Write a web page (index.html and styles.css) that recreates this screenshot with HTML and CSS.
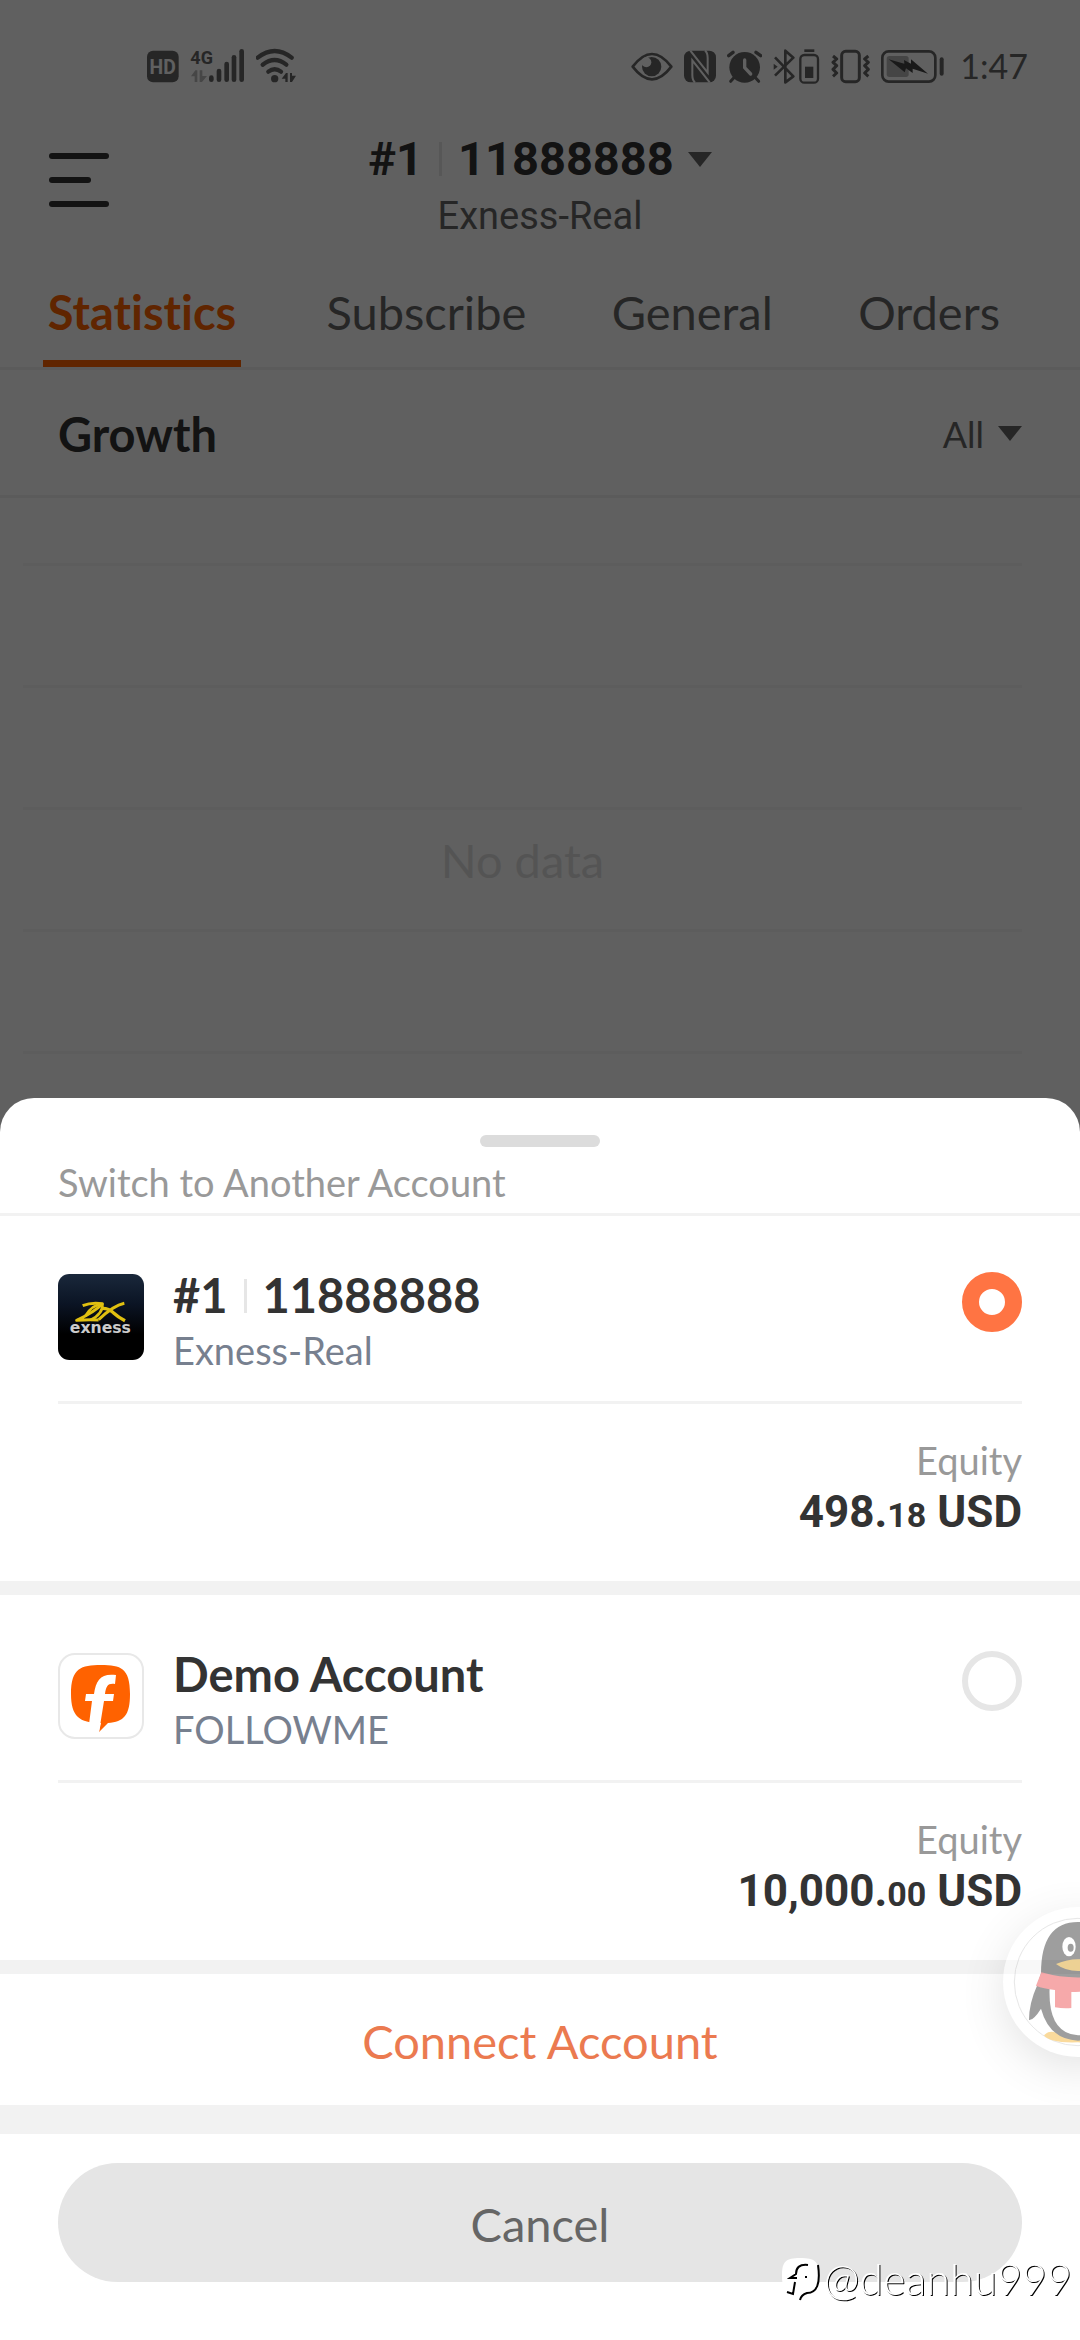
FILE: index.html
```html
<!DOCTYPE html>
<html lang="en">
<head>
<meta charset="UTF-8">
<meta name="viewport" content="width=device-width, initial-scale=1.0">
<title>Switch Account</title>
<link rel="stylesheet" href="styles.css">
</head>
<body>

<div class="page">
    <div class="status-bar">
        <div class="status-group">
            <svg class="icon-hd" viewBox="53 54 96 108" aria-hidden="true">
                <rect x="53" y="62" width="95" height="95" rx="18" fill="#666"/>
                <text x="100" y="132" font-size="58" font-weight="700" text-anchor="middle" fill="#fff">HD</text>
            </svg>
            <svg class="icon-signal" viewBox="180 54 165 108" aria-hidden="true">
                <text x="181" y="101" font-size="54" font-weight="700" fill="#666">4G</text>
                <g fill="#bbb">
                    <path d="M183 139 L196 121 H202 V156 H194 V139 Z"/>
                    <path d="M209 121 H217 V138 H231 L216 156 H209 Z"/>
                </g>
                <g stroke="#666" stroke-width="14" stroke-linecap="round">
                    <path d="M244 143 V149"/>
                    <path d="M267 123 V149"/>
                    <path d="M290 102 V149"/>
                    <path d="M312 82 V149"/>
                    <path d="M335 64 V149"/>
                </g>
            </svg>
            <svg class="icon-wifi" viewBox="375 54 126 108" aria-hidden="true">
                <g fill="none" stroke="#666" stroke-width="13" stroke-linecap="round">
                    <path d="M380 83 Q431 43 482 83"/>
                    <path d="M395 104 Q431 76 466 104"/>
                    <path d="M412 125 Q431 110 450 125"/>
                </g>
                <circle cx="431" cy="146" r="11" fill="#666"/>
                <path d="M452 146 L465 129 H470 V156 H463 V146 Z M477 129 H483 V137 H495 L483 156 H477 Z" fill="#666"/>
            </svg>
        </div>
        <div class="status-group">
            <svg class="icon-eye" viewBox="59 54 126 108" aria-hidden="true">
                <path d="M64 110 Q122 34 180 110 Q122 186 64 110 Z" fill="none" stroke="#666" stroke-width="8" stroke-linejoin="round"/>
                <circle cx="121" cy="110" r="29" fill="#666"/>
                <circle cx="105" cy="97" r="15" fill="#fff"/>
            </svg>
            <svg class="icon-nfc" viewBox="219 54 96 108" aria-hidden="true">
                <rect x="219" y="62" width="96" height="95" rx="20" fill="#666"/>
                <path d="M238 62 L290 128 V84 Q290 68 282 62 M296 157 L244 91 V135 Q244 151 252 157" fill="none" stroke="#fff" stroke-width="6"/>
            </svg>
            <svg class="icon-alarm" viewBox="351 54 105 108" aria-hidden="true">
                <circle cx="404" cy="112" r="46" fill="#666"/>
                <path d="M356 77 L369 67 M452 77 L438 67" stroke="#666" stroke-width="10" stroke-linecap="round"/>
                <path d="M371 144 L362 154 M437 144 L446 154" stroke="#666" stroke-width="9" stroke-linecap="round"/>
                <path d="M404 90 V113 L422 132" fill="none" stroke="#fff" stroke-width="10" stroke-linecap="round"/>
            </svg>
            <svg class="icon-bluetooth" viewBox="489 54 141 108" aria-hidden="true">
                <path d="M495 82 L550 139 L526 157 V62 L550 83 L495 137" fill="none" stroke="#666" stroke-width="8" stroke-linejoin="round"/>
                <path d="M491 101 L503 110 L491 119 Z" fill="#666"/>
                <rect x="571" y="75" width="53" height="83" rx="12" fill="none" stroke="#666" stroke-width="7"/>
                <path d="M583 62 H613" stroke="#666" stroke-width="8"/>
                <rect x="585" y="110" width="25" height="34" fill="#666"/>
            </svg>
            <svg class="icon-vibrate" viewBox="663 54 117 108" aria-hidden="true">
                <rect x="695" y="64" width="53" height="91" rx="12" fill="none" stroke="#666" stroke-width="9"/>
                <path d="M669 78 L680 87 L669 97 L680 107 L669 118 L680 129 L669 139 M775 78 L764 87 L775 97 L764 107 L775 118 L764 129 L775 139" fill="none" stroke="#666" stroke-width="9" stroke-linejoin="round"/>
            </svg>
            <svg class="icon-battery" viewBox="819 54 189 108" aria-hidden="true">
                <rect x="823" y="64" width="159" height="91" rx="19" fill="none" stroke="#666" stroke-width="8"/>
                <rect x="836" y="78" width="66" height="63" rx="8" fill="#b8b8b8"/>
                <path d="M842 88 L889 101 L888 90 L909 101 L909 88 L960 131 L914 116 V129 L894 115 L890 127 Z" fill="#444"/>
                <path d="M1001 88 V131" stroke="#666" stroke-width="12" stroke-linecap="round"/>
            </svg>
            <span class="clock">1:47</span>
        </div>
    </div>

    <header class="top-bar">
        <button class="menu-button" type="button" aria-label="Menu">
            <span class="menu-line"></span>
            <span class="menu-line menu-line-short"></span>
            <span class="menu-line"></span>
        </button>
        <button class="account-title" type="button">
            <span class="account-number">#1<span class="separator"></span>11888888<span class="caret"></span></span>
            <span class="account-server">Exness-Real</span>
        </button>
    </header>

    <nav class="tabs">
        <a class="tab active" href="#statistics">Statistics</a>
        <a class="tab" href="#subscribe">Subscribe</a>
        <a class="tab" href="#general">General</a>
        <a class="tab" href="#orders">Orders</a>
    </nav>

    <section class="growth">
        <div class="growth-header">
            <h2>Growth</h2>
            <button class="filter" type="button">All<span class="caret"></span></button>
        </div>
        <div class="chart">
            <div class="chart-row"></div>
            <div class="chart-row"></div>
            <div class="chart-row"></div>
            <div class="chart-row">No data</div>
            <div class="chart-row"></div>
        </div>
    </section>
</div>

<div class="backdrop">
    <form class="sheet">
        <div class="sheet-header">
            <span class="grabber"></span>
            <h1>Switch to Another Account</h1>
        </div>

        <div class="account">
            <label class="account-main" for="account1">
                <svg class="logo" viewBox="24 24 258 258" aria-hidden="true">
                    <defs>
                        <linearGradient id="night" x1="0" y1="0" x2="0" y2="1">
                            <stop offset="0" stop-color="#1a283b"/>
                            <stop offset="0.35" stop-color="#0b1424"/>
                            <stop offset="0.7" stop-color="#000"/>
                        </linearGradient>
                    </defs>
                    <rect x="24" y="24" width="258" height="258" rx="34" fill="url(#night)"/>
                    <g fill="none" stroke="#e0c010" stroke-linejoin="round">
                        <path d="M98 119 Q124 108 157 113 Q136 136 80 163 Q118 160 146 162" stroke-width="9"/>
                        <path d="M106 150 Q128 114 157 115 Q160 142 122 162" stroke-width="8"/>
                        <path d="M155 127 Q176 126 190 140 Q204 153 225 164" stroke-width="10"/>
                        <path d="M223 112 Q190 119 146 161" stroke-width="9"/>
                    </g>
                    <text x="151" y="202" font-size="47" font-weight="900" text-anchor="middle" fill="#ccc">exness</text>
                </svg>
                <span class="account-info">
                    <span class="account-name">#1<span class="separator"></span>11888888</span>
                    <span class="account-broker">Exness-Real</span>
                </span>
                <input class="account-radio" type="radio" name="account" id="account1" checked>
            </label>
            <div class="equity">
                <span class="equity-label">Equity</span>
                <span class="equity-value">498.<small>18</small> USD</span>
            </div>
        </div>

        <div class="account">
            <label class="account-main" for="account2">
                <svg class="logo" viewBox="0 0 86 86" aria-hidden="true">
                    <rect x="1" y="1" width="84" height="84" rx="16" fill="#fff" stroke="#e8e8e8" stroke-width="2"/>
                    <path d="M43 12 C63 12 72 15 72 41 C72 62 66 69 50 70 L41 79 L43 70 C21 70 13 63 13 41 C13 15 23 12 43 12 Z" fill="#ff6200"/>
                    <path d="M58 22 L57 31 C50 30 48 33 47 41 H56 L55 48 H46 L41 79 H30 L34 48 H27 L28 41 H36 C38 27 43 20 58 22 Z" fill="#fff"/>
                </svg>
                <span class="account-info">
                    <span class="account-name">Demo Account</span>
                    <span class="account-broker">FOLLOWME</span>
                </span>
                <input class="account-radio" type="radio" name="account" id="account2">
            </label>
            <div class="equity">
                <span class="equity-label">Equity</span>
                <span class="equity-value">10,000.<small>00</small> USD</span>
            </div>
        </div>

        <button class="connect-button" type="button">Connect Account</button>

        <div class="sheet-footer">
            <button class="cancel-button" type="button">Cancel</button>
        </div>
    </form>

    <!-- Floating chat button, half off the right edge -->
    <button class="chat-button" type="button" aria-label="Chat">
        <svg viewBox="69 51 450 450" aria-hidden="true">
            <circle cx="294" cy="276" r="191" fill="none" stroke="#d0d0d0" stroke-width="3"/>
            <path d="M192 436 Q205 420 230 428 L290 446 L358 428 Q383 420 396 436 Q380 460 294 457 Q208 460 192 436 Z" fill="#f6b73c"/>
            <path d="M183 250 Q183 96 294 96 Q405 96 405 250 L412 290 Q441 340 441 390 Q428 392 407 356 Q390 448 294 452 Q208 448 183 356 Q160 392 147 390 Q147 340 172 285 Z" fill="#3f3f3f"/>
            <path d="M209 290 H379 Q386 430 294 436 Q202 430 209 290 Z" fill="#fff"/>
            <ellipse cx="267" cy="170" rx="20" ry="29" fill="#fff"/>
            <ellipse cx="321" cy="170" rx="20" ry="29" fill="#fff"/>
            <ellipse cx="272" cy="173" rx="9" ry="12" fill="#3f3f3f"/>
            <ellipse cx="316" cy="173" rx="9" ry="12" fill="#3f3f3f"/>
            <path d="M228 222 Q294 194 360 222 Q332 243 294 243 Q256 243 228 222 Z" fill="#eab238"/>
            <path d="M184 247 Q294 278 404 247 L420 287 Q350 306 274 306 V354 Q250 356 225 352 V300 Q190 296 168 287 Z" fill="#ee5658"/>
        </svg>
    </button>

    <div class="watermark">
        <svg class="watermark-logo" viewBox="0 0 40 44" aria-hidden="true">
            <path d="M19 1 C34 1 38 4 38 19 C38 32 35 35 25 36 L19 43 L20 37 C5 37 1 33 1 19 C1 4 5 1 19 1 Z" fill="#fff"/>
            <path d="M27 8 C18 7 15 11 15 17 L9 21 H16 M24 20 H26 M14 25 L12 37 L6 35 M37 8 Q41 36 26 36 Q20 38 19 43" fill="none" stroke="#000" stroke-width="2"/>
        </svg>
        <span>@deanhu999</span>
    </div>
</div>

</body>
</html>
```
FILE: styles.css
```css
* {
    box-sizing: border-box;
}
body {
    margin: 0;
    font-family: Lato, "Open Sans", sans-serif;
    font-variant-ligatures: none;
    color: #333;
    background-color: #fff;
}
button {
    padding: 0;
    border: none;
    background: none;
    font-family: inherit;
    color: inherit;
    cursor: pointer;
}
h1, h2 {
    margin: 0;
}
.page {
    height: 100vh;
    overflow: hidden;
}

/* Status bar */
.status-bar {
    display: flex;
    justify-content: space-between;
    padding: 48px 52px 0 147px;
    font-family: Roboto, sans-serif;
    color: #666;
}
.status-group {
    display: flex;
    align-items: center;
    gap: 11px;
}
.status-group svg {
    height: 36px;
}
.clock {
    margin-left: 5px;
    font-family: Lato, sans-serif;
    font-size: 34px;
    line-height: 36px;
}

/* Top bar */
.top-bar {
    display: grid;
    grid-template-columns: 1fr auto 1fr;
    padding: 50px 49px 0;
}
.menu-button {
    display: flex;
    flex-direction: column;
    gap: 18px;
    width: 60px;
    padding-top: 19px;
}
.menu-line {
    width: 60px;
    height: 6px;
    border-radius: 3px;
    background-color: #333;
}
.menu-line-short {
    width: 42px;
}
.account-title {
    display: flex;
    flex-direction: column;
    align-items: center;
    gap: 12px;
    font-family: Roboto, sans-serif;
}
.account-number {
    display: flex;
    align-items: center;
    font-size: 47px;
    line-height: 50px;
    font-weight: 700;
}
.account-server {
    font-size: 38px;
    line-height: 40px;
    color: #666;
}
.separator {
    display: inline-block;
    width: 3px;
    height: 34px;
    margin: 0 16px;
    background-color: #e6e6e6;
}
.caret {
    margin-left: 14px;
    border: 12px solid transparent;
    border-top: 15px solid #666;
    border-bottom: 0;
}

/* Tabs */
.tabs {
    display: flex;
    justify-content: space-between;
    margin-top: 48px;
    padding: 0 80px 0 43px;
    border-bottom: 3px solid #f2f2f2;
}
.tab {
    padding: 6px 0 26px;
    border-bottom: 7px solid transparent;
    font-size: 47px;
    line-height: 44px;
    color: #666;
    text-decoration: none;
}
.tab.active {
    min-width: 198px;
    border-color: #ff6200;
    color: #ff6200;
    font-weight: 700;
    text-align: center;
}

/* Growth */
.growth-header {
    display: flex;
    justify-content: space-between;
    align-items: center;
    height: 128px;
    padding: 2px 58px 0;
    border-bottom: 3px solid #f2f2f2;
}
.growth-header h2 {
    font-size: 47px;
}
.filter {
    display: flex;
    align-items: center;
    font-size: 36px;
    color: #666;
}
.chart {
    padding: 0 58px 0 23px;
}
.chart-row {
    height: 122px;
    border-bottom: 3px solid #f8f8f8;
    font-size: 47px;
    line-height: 100px;
    text-align: center;
    color: #e0e0e0;
}
.chart-row:first-child {
    height: 68px;
}

/* Bottom sheet */
.backdrop {
    position: fixed;
    inset: 0;
    display: flex;
    flex-direction: column;
    justify-content: flex-end;
    overflow: hidden;
    background-color: rgba(0, 0, 0, 0.624);
}
.sheet {
    border-radius: 34px 34px 0 0;
    background-color: #fff;
}
.sheet-header {
    padding: 37px 58px 8px;
    border-bottom: 3px solid #f2f2f2;
}
.grabber {
    display: block;
    width: 120px;
    height: 12px;
    margin: 0 auto 12px;
    border-radius: 6px;
    background-color: #dcdcdc;
}
.sheet-header h1 {
    font-size: 38px;
    line-height: 46px;
    font-weight: 400;
    color: #999;
}
.account {
    padding: 0 58px;
    border-bottom: 14px solid #f2f2f2;
}
.account-main {
    display: flex;
    align-items: flex-start;
    height: 188px;
    padding-top: 56px;
    border-bottom: 3px solid #f2f2f2;
}
.logo {
    width: 86px;
    height: 86px;
    margin-top: 2px;
    font-family: "DejaVu Sans", sans-serif;
}
.account-info {
    display: flex;
    flex: 1;
    flex-direction: column;
    gap: 10px;
    margin-left: 29px;
}
.account-name {
    font-size: 47px;
    line-height: 46px;
    font-weight: 700;
}
.account-broker {
    font-size: 38px;
    line-height: 44px;
    color: #77808f;
}
.account-radio {
    width: 60px;
    height: 60px;
    margin: 0;
    border: 6px solid #e6e6e6;
    border-radius: 50%;
    appearance: none;
}
.account-radio:checked {
    border: 17px solid #ff7443;
}
.equity {
    display: flex;
    flex-direction: column;
    align-items: flex-end;
    gap: 5px;
    padding: 33px 0 45px;
}
.equity-label {
    font-size: 38px;
    line-height: 46px;
    color: #999;
}
.equity-value {
    font-family: Roboto, sans-serif;
    font-size: 44px;
    line-height: 48px;
    font-weight: 700;
}
.equity-value small {
    font-size: 34px;
    line-height: 1;
}
.connect-button {
    display: block;
    width: 100%;
    height: 160px;
    padding-top: 2px;
    border-bottom: 29px solid #f2f2f2;
    font-size: 47px;
    color: #eb7a50;
}
.sheet-footer {
    padding: 29px 58px 58px;
}
.cancel-button {
    width: 100%;
    height: 119px;
    padding-top: 2px;
    border-radius: 60px;
    background-color: #e5e5e5;
    font-size: 47px;
    color: #666;
}

/* Items over the sheet */
.chat-button {
    position: absolute;
    right: -73px;
    bottom: 283px;
    width: 150px;
    height: 150px;
    border-radius: 50%;
    background-color: #fff;
    box-shadow: 0 12px 40px rgba(0, 0, 0, 0.2);
    opacity: 0.5;
}
.watermark {
    position: absolute;
    right: 8px;
    bottom: 37px;
    display: flex;
    align-items: center;
    gap: 3px;
    font-size: 43px;
    line-height: 48px;
    font-weight: 300;
    color: #fff;
    text-shadow: 1px 1px 0 #000;
}
.watermark-logo {
    width: 40px;
    height: 44px;
}
```
